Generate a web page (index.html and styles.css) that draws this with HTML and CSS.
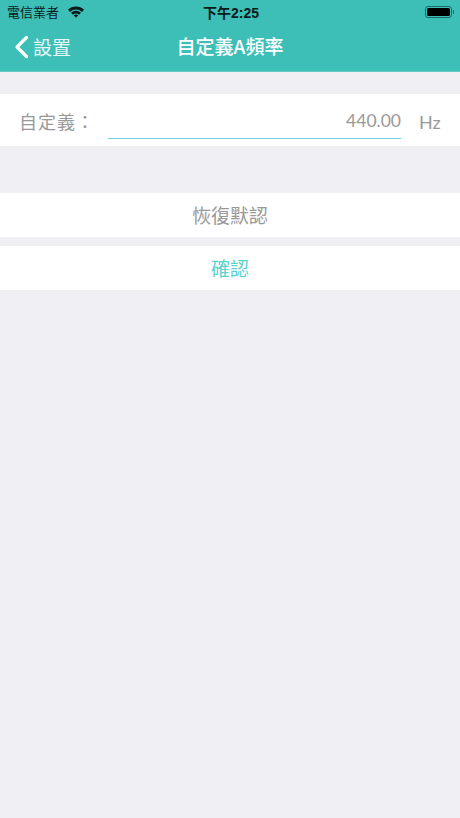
FILE: index.html
```html
<!doctype html>
<html>
<head>
<meta charset="utf-8">
<title>自定義A頻率</title>
<link rel="stylesheet" href="styles.css">
</head>
<body>
	<div class="header">
		<div class="status-bar">
			<div class="status-left">
				<span class="carrier">電信業者</span>
				<svg class="wifi" width="16" height="12" viewBox="0 0 16 12">
					<path d="M0 3.8 A11.3 11.3 0 0 1 16 3.8 L14 5.9 A8.5 8.5 0 0 0 2 5.9 Z" fill="#0a1a18"/>
					<path d="M3 6.8 A7 7 0 0 1 13 6.8 L11.1 8.7 A4.4 4.4 0 0 0 4.9 8.7 Z" fill="#0a1a18"/>
					<path d="M5.8 9.6 A3.1 3.1 0 0 1 10.2 9.6 L8 11.8 Z" fill="#0a1a18"/>
				</svg>
			</div>
			<span class="time">下午2:25</span>
			<div class="battery">
				<div class="battery-level"></div>
				<div class="battery-nub"></div>
			</div>
		</div>
		<div class="nav-bar">
			<div class="back">
				<svg class="back-icon" width="15" height="24" viewBox="0 0 15 24">
					<path d="M12.5 2.5 L3 12 L12.5 21.5" fill="none" stroke="#fff" stroke-width="3.2" stroke-linecap="round" stroke-linejoin="round"/>
				</svg>
				<span>設置</span>
			</div>
			<div class="nav-title">自定義A頻率</div>
		</div>
	</div>

	<div class="custom-row">
		<span class="custom-label">自定義：</span>
		<div class="custom-input">440.00</div>
		<span class="custom-unit">Hz</span>
	</div>

	<div class="button reset-button">恢復默認</div>
	<div class="button confirm-button">確認</div>
</body>
</html>
```

FILE: styles.css
```css
html, body {
	margin: 0;
	padding: 0;
}

body {
	width: 460px;
	height: 818px;
	overflow: hidden;
	background-color: #efeff4;
	font-family: "Noto Sans CJK TC", "Liberation Sans", sans-serif;
}

.header {
	height: 72px;
	background-color: #3dbfb8;
	border-bottom: 1px solid #62cdc7;
	box-sizing: border-box;
}

.status-bar {
	height: 23px;
	display: flex;
	align-items: center;
	justify-content: space-between;
	padding: 0 8px 0 7px;
	position: relative;
	color: #0a1a18;
	font-size: 13px;
}

.status-left {
	display: flex;
	align-items: center;
	gap: 9px;
}

.carrier {
	line-height: 23px;
}

.time {
	position: absolute;
	left: 2px;
	right: 0;
	text-align: center;
	font-family: "Liberation Sans", "Noto Sans CJK TC", sans-serif;
	font-weight: bold;
	font-size: 14px;
}

.battery {
	width: 27px;
	height: 12px;
	border: 1px solid #1c6a66;
	border-radius: 3px;
	box-sizing: border-box;
	padding: 1px;
	position: relative;
}

.battery-level {
	height: 100%;
	background-color: #000;
	border-radius: 1.5px;
}

.battery-nub {
	position: absolute;
	right: -3px;
	top: 3px;
	width: 1px;
	height: 4px;
	background-color: #1c6a66;
}

.nav-bar {
	height: 48px;
	box-sizing: border-box;
	padding-bottom: 3px;
	display: flex;
	align-items: center;
	justify-content: center;
	position: relative;
	color: #fff;
}

.back {
	position: absolute;
	left: 14px;
	top: 12px;
	display: flex;
	align-items: center;
	gap: 4px;
	font-size: 19px;
	line-height: 24px;
	color: #e6f7f6;
}

.nav-title {
	font-size: 19px;
	font-weight: 500;
}

.custom-row {
	margin-top: 22px;
	height: 52px;
	background-color: #fff;
	display: flex;
	align-items: center;
	padding: 0 19px;
	color: #999;
	font-size: 18px;
}

.custom-label {
	width: 89px;
	letter-spacing: 1px;
	white-space: nowrap;
	padding-top: 1px;
}

.custom-input {
	width: 293px;
	height: 36px;
	line-height: 36px;
	margin-top: 2px;
	box-sizing: border-box;
	border-bottom: 1px solid #6fd6de;
	text-align: right;
	font-family: "Lato", "Liberation Sans", sans-serif;
	font-size: 17.5px;
}

.custom-unit {
	margin-left: 18px;
	padding-top: 3px;
	font-family: "Lato", "Liberation Sans", sans-serif;
	font-size: 18px;
}

.button {
	height: 44px;
	line-height: 43px;
	background-color: #fff;
	text-align: center;
	font-size: 19px;
}

.reset-button {
	margin-top: 47px;
	color: #999;
}

.confirm-button {
	margin-top: 9px;
	color: #5ad3cd;
}
```
